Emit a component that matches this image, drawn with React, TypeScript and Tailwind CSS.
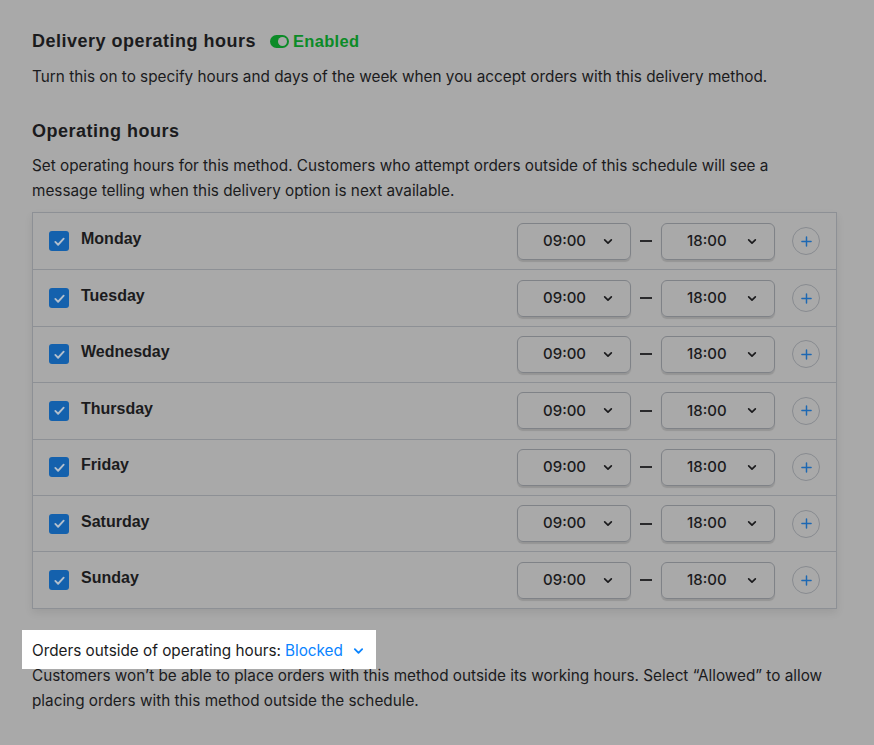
const days = ['Monday', 'Tuesday', 'Wednesday', 'Thursday', 'Friday', 'Saturday', 'Sunday'];

const headFont = { fontFamily: '"Liberation Sans", Arial, sans-serif' };

function Chevron({ className }: { className?: string }) {
  return (
    <svg viewBox="0 0 12 8" className={className} fill="none">
      <path d="M2 2l4 4 4-4" stroke="currentColor" strokeWidth="2" strokeLinecap="round" strokeLinejoin="round" />
    </svg>
  );
}

function TimeSelect({ value }: { value: string }) {
  return (
    <div className="w-[114px] h-[37px] flex items-center justify-between pl-[25px] pr-[17px] rounded-[6px] border border-[#7f8287] shadow-[0_2px_1px_rgba(0,0,0,0.12)] text-[15px] font-medium text-[#1b1b1d]">
      <span>{value}</span>
      <Chevron className="w-[10px] h-[7px] text-[#1b1b1d]" />
    </div>
  );
}

function DayRow({ day, first }: { day: string; first: boolean }) {
  return (
    <div className={`h-[56.4px] flex items-center pl-4 pr-4 ${first ? '' : 'border-t border-[#8d9095]'}`}>
      {/* checkbox */}
      <div className="w-[20px] h-[20px] rounded-[3px] bg-[#1461ad] flex items-center justify-center">
        <svg viewBox="0 0 14 14" className="w-[13px] h-[13px]" fill="none">
          <path d="M2.5 7.5l3 3 6-6.5" stroke="#b3bfcc" strokeWidth="2" strokeLinecap="round" strokeLinejoin="round" />
        </svg>
      </div>
      <span className="ml-[12px] text-[16px] font-bold text-[#1b1b1d] -translate-y-[2px]" style={headFont}>{day}</span>
      <div className="ml-auto flex items-center">
        <TimeSelect value="09:00" />
        <div className="w-[12px] h-[2px] bg-[#2a2a2c] mx-[9px]" />
        <TimeSelect value="18:00" />
        <div className="ml-[17px] w-[28px] h-[28px] rounded-full border border-[#888b90] flex items-center justify-center">
          <svg viewBox="0 0 12 12" className="w-[11px] h-[11px]" fill="none">
            <path d="M6 1v10M1 6h10" stroke="#1d68b3" strokeWidth="1.6" strokeLinecap="round" />
          </svg>
        </div>
      </div>
    </div>
  );
}

export default function App() {
  return (
    <div className="min-h-[745px] w-full bg-[#a9a9a9] px-8 pt-[29px] text-[#1b1b1d]" style={{ fontFamily: 'Inter, "Liberation Sans", sans-serif' }}>
      <div className="flex items-center h-[24px]" style={headFont}>
        <h1 className="text-[18px] font-bold tracking-[0.5px]">Delivery operating hours</h1>
        <div className="ml-[14px] flex items-center text-[#0b8b27] font-bold text-[16.5px] tracking-[0.3px]">
          <div className="w-[19px] h-[13px] rounded-full bg-[#0b8b27] flex items-center justify-end pr-[2px]">
            <div className="w-[9px] h-[9px] rounded-full bg-[#a9a9a9]" />
          </div>
          <span className="ml-[4px]">Enabled</span>
        </div>
      </div>
      <p className="mt-[10.5px] text-[15.3px] leading-[25px]">
        Turn this on to specify hours and days of the week when you accept orders with this delivery method.
      </p>

      <h2 className="mt-[30.5px] text-[18px] leading-[24px] font-bold tracking-[0.5px]" style={headFont}>Operating hours</h2>
      <p className="mt-[9.5px] text-[15.3px] leading-[25px] w-[780px]">
        Set operating hours for this method. Customers who attempt orders outside of this schedule will see a message telling when this delivery option is next available.
      </p>

      <div className="mt-[9.5px] w-[805px] border border-[#8d9095] shadow-[0_4px_8px_rgba(0,0,0,0.08)]">
        {days.map((d, i) => (
          <DayRow key={d} day={d} first={i === 0} />
        ))}
      </div>

      <div className="mt-[29.5px] relative h-[25px]">
        <div className="absolute -left-[10px] -top-[8.5px] w-[354px] h-[39px] bg-white" />
        <div className="relative flex items-center text-[15.3px] leading-[25px] text-[#1b1b1d]">
          <span>Orders outside of operating hours:</span>
          <span className="ml-[4px] text-[#0a84ff]">Blocked</span>
          <Chevron className="ml-[10px] w-[11px] h-[8px] text-[#0a84ff]" />
        </div>
      </div>
      <p className="text-[15.3px] leading-[25px] w-[805px]">
        Customers won’t be able to place orders with this method outside its working hours. Select “Allowed” to allow placing orders with this method outside the schedule.
      </p>
    </div>
  );
}
